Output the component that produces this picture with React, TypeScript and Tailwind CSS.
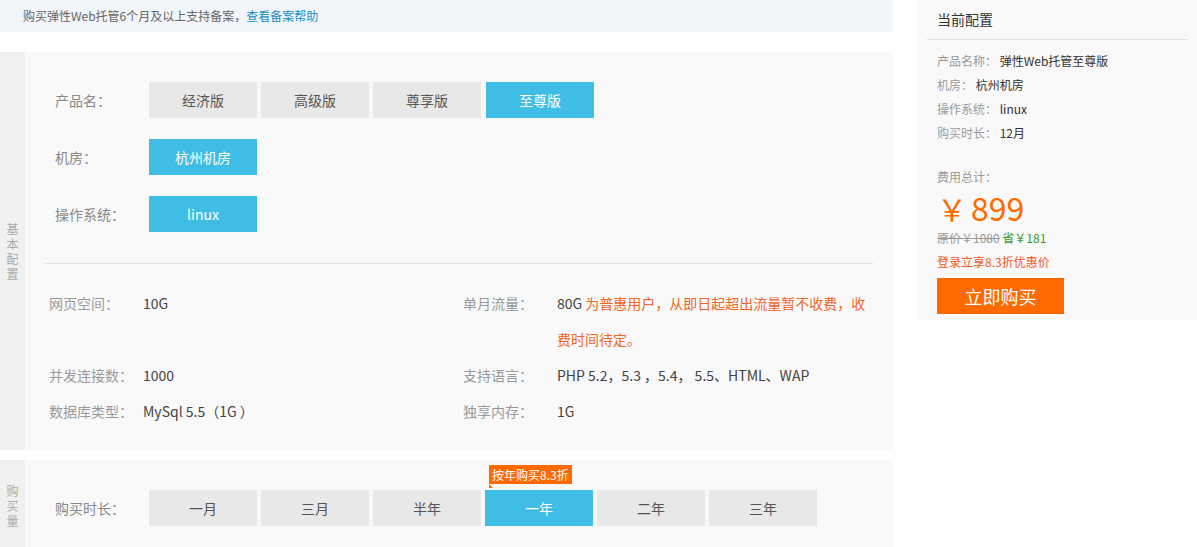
import type { ReactNode } from "react";

const FONT = { fontFamily: '"Noto Sans CJK SC", "Noto Sans", sans-serif' };

function Opt({ label, active }: { label: string; active?: boolean }) {
  return (
    <div
      className={
        "flex h-9 w-[108px] items-center justify-center text-[14px] " +
        (active ? "bg-[#3fbde5] text-white" : "bg-[#e8e8e8] text-[#555]")
      }
    >
      {label}
    </div>
  );
}

function OptRow({ label, children }: { label: string; children: ReactNode }) {
  return (
    <div className="flex items-center">
      <div className="w-[104px] pl-[10px] text-[14px] text-[#888]">{label}</div>
      <div className="flex gap-1">{children}</div>
    </div>
  );
}

function Spec({ label, children }: { label: string; children: ReactNode }) {
  return (
    <div className="flex text-[14px] leading-9">
      <div className="w-[94px] shrink-0 text-[#999]">{label}</div>
      <div className="text-[#444]">{children}</div>
    </div>
  );
}

function SideTag({ text }: { text: string }) {
  return (
    <div className="flex w-[25px] shrink-0 items-center justify-center bg-[#f0f0f0]">
      <div className="flex w-3 flex-col text-center text-[12px] leading-[15px] text-[#aaa]">
        {text.split("").map((c, i) => (
          <span key={i}>{c}</span>
        ))}
      </div>
    </div>
  );
}

export default function App() {
  return (
    <div className="flex h-[547px] w-[1197px] overflow-hidden bg-white" style={FONT}>
      <div className="w-[893px] shrink-0">
        <div className="flex h-8 items-center bg-[#f2f5f9] pl-[23px] text-[12px] text-[#666]">
          购买弹性Web托管6个月及以上支持备案，<span className="text-[#1a8cc8]">查看备案帮助</span>
        </div>

        <div className="mt-5 flex h-[398px]">
          <SideTag text="基本配置" />
          <div className="flex-1 bg-[#f9f9f9] px-5 pt-[30px]">
            <div className="flex flex-col gap-[21px]">
              <OptRow label="产品名：">
                <Opt label="经济版" />
                <Opt label="高级版" />
                <Opt label="尊享版" />
                <div className="ml-px">
                  <Opt label="至尊版" active />
                </div>
              </OptRow>
              <OptRow label="机房：">
                <Opt label="杭州机房" active />
              </OptRow>
              <OptRow label="操作系统：">
                <Opt label="linux" active />
              </OptRow>
            </div>
            <div className="mt-[31px] h-px bg-[#e0e0e0]" />
            <div className="mt-[21px] grid grid-cols-[414px_1fr] pl-1">
              <div className="flex flex-col">
                <Spec label="网页空间：">10G</Spec>
                <div className="h-9" />
                <Spec label="并发连接数：">1000</Spec>
                <Spec label="数据库类型：">MySql 5.5（1G ）</Spec>
              </div>
              <div className="flex flex-col">
                <Spec label="单月流量：">
                  <div>
                    80G{" "}
                    <span className="text-[#f26522]">为普惠用户，从即日起超出流量暂不收费，收</span>
                  </div>
                  <div className="text-[#f26522]">费时间待定。</div>
                </Spec>
                <Spec label="支持语言：">PHP 5.2，5.3 ，5.4， 5.5、HTML、WAP</Spec>
                <Spec label="独享内存：">1G</Spec>
              </div>
            </div>
          </div>
        </div>

        <div className="mt-[10px] flex h-[90px]">
          <SideTag text="购买量" />
          <div className="flex-1 bg-[#f9f9f9] px-5 pt-[30px]">
            <OptRow label="购买时长：">
              <Opt label="一月" />
              <Opt label="三月" />
              <Opt label="半年" />
              <div className="relative">
                <div className="absolute -top-[25px] left-[4px] whitespace-nowrap bg-[#ff6a00] px-[3px] text-[12px] leading-[19px] text-white">
                  按年购买8.3折
                  <span className="absolute -bottom-[4px] left-0 h-0 w-0 border-l-[4px] border-t-[4px] border-l-[#ff6a00] border-t-transparent" />
                </div>
                <Opt label="一年" active />
              </div>
              <Opt label="二年" />
              <Opt label="三年" />
            </OptRow>
          </div>
        </div>
      </div>

      <div className="ml-6 h-[320px] w-[280px] shrink-0 bg-[#f9f9f9] px-[10px]">
        <div className="flex h-10 items-center border-b border-[#ddd] pl-[10px] text-[14px] text-[#333]">
          当前配置
        </div>
        <div className="pl-[10px] pt-[9px] text-[12px] leading-6">
          <div>
            <span className="text-[#999]">产品名称： </span>
            <span className="text-[#333]">弹性Web托管至尊版</span>
          </div>
          <div>
            <span className="text-[#999]">机房： </span>
            <span className="text-[#333]">杭州机房</span>
          </div>
          <div>
            <span className="text-[#999]">操作系统： </span>
            <span className="text-[#333]">linux</span>
          </div>
          <div>
            <span className="text-[#999]">购买时长： </span>
            <span className="text-[#333]">12月</span>
          </div>
          <div className="mt-5 text-[#999]">费用总计：</div>
          <div className="flex items-baseline text-[#ff6a00] leading-9">
            <span className="text-[30px]">￥</span>
            <span className="ml-1 text-[32px]">899</span>
          </div>
          <div>
            <span className="text-[#999] line-through">原价￥1080</span>{" "}
            <span className="text-[#3a9a2b]">省￥181</span>
          </div>
          <div className="text-[#f25a1e]">登录立享8.3折优惠价</div>
          <div className="mt-1 flex h-9 w-[127px] items-center justify-center bg-[#ff6a00] text-[18px] text-white">
            立即购买
          </div>
        </div>
      </div>
    </div>
  );
}
